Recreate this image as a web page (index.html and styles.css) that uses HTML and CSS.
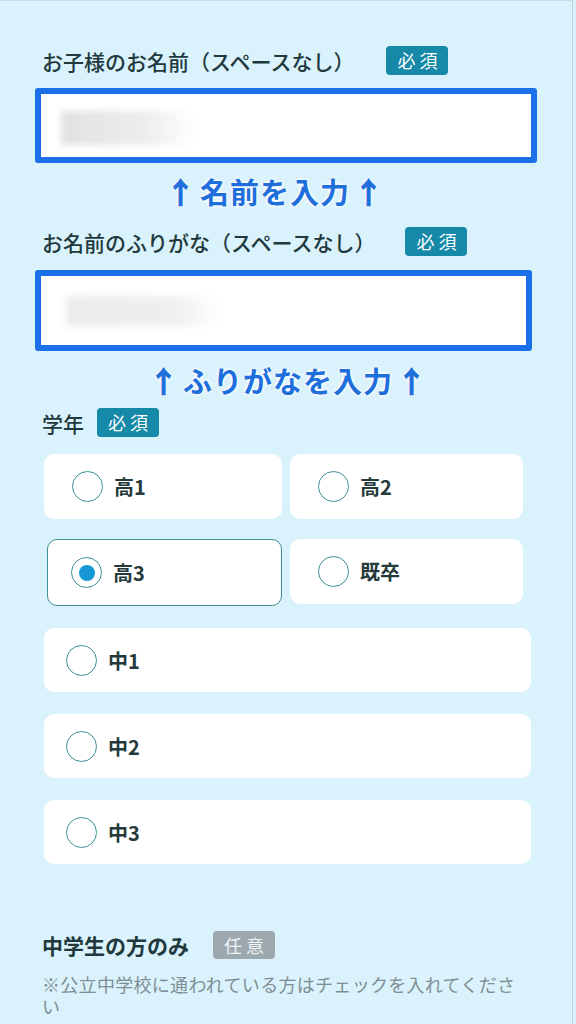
FILE: index.html
```html
<!DOCTYPE html>
<html lang="ja">
<head>
  <meta charset="UTF-8" />
  <meta name="viewport" content="width=device-width, initial-scale=1.0"/>
  <title>お申し込みフォーム</title>
  <link rel="stylesheet" href="styles.css">
</head>
<body>
  <div class="page">
    <form class="form">
      <div class="label-row">
        <span class="label">お子様のお名前（スペースなし）</span>
        <span class="badge">必須</span>
      </div>
      <div class="field field-name"><span class="redacted"></span></div>
      <p class="guide guide-name"><span class="arrow">↑</span>名前を入力<span class="arrow">↑</span></p>

      <div class="label-row label-row-kana">
        <span class="label">お名前のふりがな（スペースなし）</span>
        <span class="badge">必須</span>
      </div>
      <div class="field field-kana"><span class="redacted redacted-kana"></span></div>
      <p class="guide guide-kana"><span class="arrow">↑</span>ふりがなを入力<span class="arrow">↑</span></p>

      <div class="label-row label-row-grade">
        <span class="label">学年</span>
        <span class="badge badge-near">必須</span>
      </div>

      <div class="grade-grid">
        <label class="option"><span class="radio"></span>高1</label>
        <label class="option"><span class="radio"></span>高2</label>
        <label class="option selected"><span class="radio checked"></span>高3</label>
        <label class="option"><span class="radio"></span>既卒</label>
      </div>

      <div class="grade-list">
        <label class="option wide"><span class="radio"></span>中1</label>
        <label class="option wide"><span class="radio"></span>中2</label>
        <label class="option wide"><span class="radio"></span>中3</label>
      </div>

      <div class="label-row label-row-junior">
        <span class="heading">中学生の方のみ</span>
        <span class="badge badge-optional">任意</span>
      </div>
      <p class="note">※公立中学校に通われている方はチェックを入れてください</p>
    </form>
  </div>
</body>
</html>
```

FILE: styles.css
```css
:root {
  --bg: #d9f2fc;
  --text: #21393c;
  --badge: #1688a8;
  --badge-grey: #9ca8ae;
  --field-border: #1b6fe9;
  --guide: #1e6edb;
  --radio: #3d9098;
  --radio-dot: #1798d4;
  --note: #7f8e94;
}

body {
  margin: 0;
  background: var(--bg);
  color: var(--text);
  font-family: "Noto Sans CJK JP", "Noto Sans", sans-serif;
}

.page {
  box-sizing: border-box;
  width: 573px;
  min-height: 1024px;
  padding: 45px 42px 0 42px;
  border-top: 1px solid #c9dde5;
  border-right: 1px solid #bfd3db;
}

.label-row {
  display: flex;
  align-items: center;
  height: 29px;
}

.label {
  font-size: 21px;
  font-weight: 500;
}

.badge {
  margin-left: 32px;
  padding: 0 7px 0 11px;
  height: 29px;
  line-height: 29px;
  border-radius: 4px;
  background: var(--badge);
  color: #fff;
  font-size: 18px;
  letter-spacing: 4px;
}

.badge-near {
  margin-left: 13px;
}

.badge-optional {
  margin-left: 24px;
  background: var(--badge-grey);
  color: #eef3f5;
  height: 28px;
  line-height: 28px;
}

.field {
  box-sizing: border-box;
  margin: 13px 0 0 -7px;
  width: 502px;
  height: 75px;
  border: 6px solid var(--field-border);
  border-radius: 3px;
  background: #fff;
  padding: 17px 0 0 20px;
}

.field-kana {
  width: 497px;
  height: 81px;
  margin-top: 14px;
  padding: 20px 0 0 25px;
}

.redacted {
  display: block;
  width: 134px;
  height: 34px;
  background: linear-gradient(90deg, #e2e2e2, #ececec 60%, #fff);
  filter: blur(3px);
}

.redacted-kana {
  width: 154px;
  height: 30px;
  background: linear-gradient(90deg, #ececec, #efefef 70%, #fff);
}

.guide {
  margin: 11px 0 0 0;
  padding-right: 22px;
  text-align: center;
  font-size: 29px;
  font-weight: 700;
  line-height: 34px;
  letter-spacing: 1px;
  color: var(--guide);
  text-shadow: 0 0 2px #fff, 0 0 3px #fff, 0 0 4px #fff;
}

.arrow {
  margin: 0 4px;
  -webkit-text-stroke: 1px var(--guide);
}

.guide-kana {
  margin-top: 12px;
  padding-right: 0;
  padding-left: 4px;
}

.label-row-kana {
  margin-top: 19px;
}

.label-row-kana .badge {
  margin-left: 30px;
}

.label-row-grade {
  margin-top: 11px;
}

.grade-grid {
  display: grid;
  grid-template-columns: 238px 233px;
  column-gap: 8px;
  row-gap: 20px;
  margin: 17px 0 0 2px;
  width: 479px;
}

.grade-list {
  display: flex;
  flex-direction: column;
  gap: 22px;
  margin: 22px 0 0 2px;
  width: 487px;
}

.option {
  box-sizing: border-box;
  display: flex;
  align-items: center;
  gap: 11px;
  height: 65px;
  padding-left: 28px;
  border-radius: 10px;
  background: #fff;
  font-size: 20px;
  font-weight: 700;
  color: #253a3b;
}

.option.selected {
  height: 67px;
  margin-left: 3px;
  padding-left: 23px;
  border: 1.5px solid var(--radio);
}

.option.wide {
  height: 64px;
  padding-left: 22px;
}

.radio {
  box-sizing: border-box;
  width: 31px;
  height: 31px;
  border: 1.5px solid var(--radio);
  border-radius: 50%;
  display: flex;
  align-items: center;
  justify-content: center;
}

.radio.checked::after {
  content: "";
  width: 16px;
  height: 16px;
  border-radius: 50%;
  background: var(--radio-dot);
}

.label-row-junior {
  margin-top: 67px;
  height: 28px;
}

.heading {
  font-size: 21px;
  font-weight: 700;
}

.note {
  margin: 14px 0 0 0;
  font-size: 18px;
  line-height: 22px;
  letter-spacing: 0.3px;
  color: var(--note);
}
```
